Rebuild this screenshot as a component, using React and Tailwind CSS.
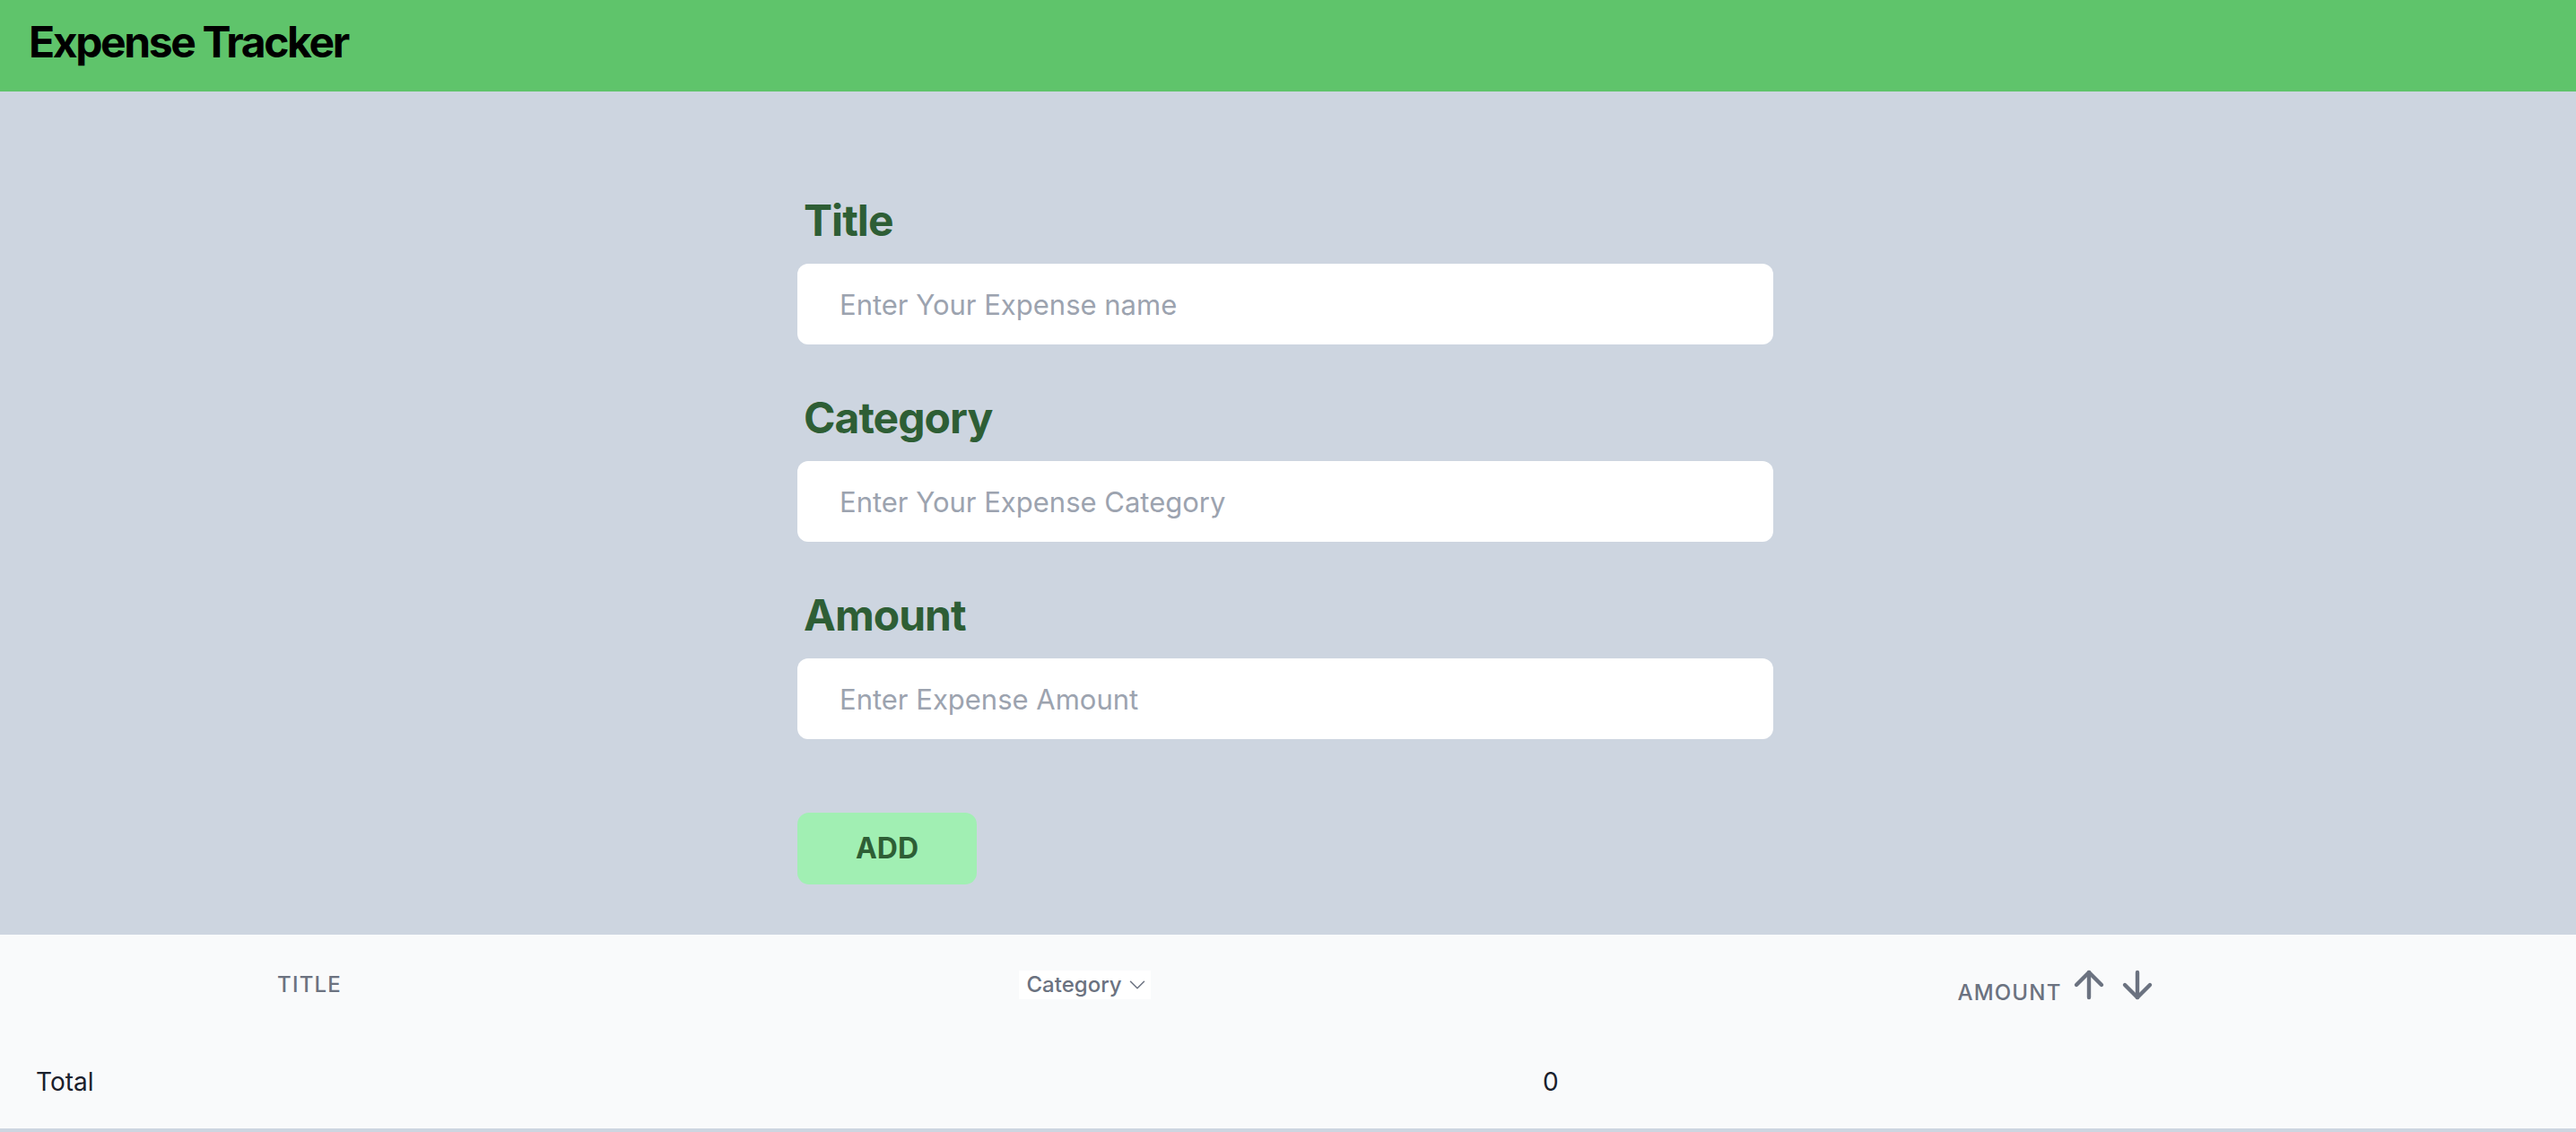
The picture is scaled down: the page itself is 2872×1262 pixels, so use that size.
import { ArrowUp, ArrowDown, ChevronDown } from 'lucide-react'

const FIELDS = [
  { label: 'Title', placeholder: 'Enter Your Expense name' },
  { label: 'Category', placeholder: 'Enter Your Expense Category' },
  { label: 'Amount', placeholder: 'Enter Expense Amount' },
]

function Field({ label, placeholder, last }) {
  return (
    <div className={last ? '' : 'mb-[58px]'}>
      <label className="block ml-[7px] mb-[24px] text-[48px] leading-[48px] font-bold tracking-[-0.02em] text-[#2e5e35]">
        {label}
      </label>
      <input
        type="text"
        placeholder={placeholder}
        className="w-full h-[90px] rounded-[12px] bg-white pl-[47px] pr-[32px] text-[31px] text-gray-800 placeholder:text-[#9ca3af] outline-none"
      />
    </div>
  )
}

export default function App() {
  return (
    <div className="min-h-screen bg-[#cdd5e0] font-['Inter',sans-serif]">
      {/* Header */}
      <header className="h-[102px] bg-[#5fc46b] px-[32px] pt-[23px]">
        <h1 className="text-[48px] leading-[48px] font-bold tracking-[-0.05em] text-black">Expense Tracker</h1>
      </header>

      {/* Form */}
      <main className="pt-[120px] pb-[56px]">
        <div className="w-[1088px] ml-[889px]">
          {FIELDS.map((f, i) => (
            <Field key={f.label} {...f} last={i === FIELDS.length - 1} />
          ))}
          <button className="mt-[82px] w-[200px] h-[80px] rounded-[13px] bg-[#a1efb3] text-[32px] leading-[32px] font-bold text-[#2e5e35]">
            ADD
          </button>
        </div>
      </main>

      {/* Table */}
      <section className="bg-[#f9fafb]">
        <div className="grid grid-cols-[690px_1038px_1fr] h-[112px] items-center">
          <div className="flex justify-center">
            <span className="text-[24px] leading-[24px] font-medium uppercase tracking-wider text-[#6b7280]">Title</span>
          </div>
          <div className="flex justify-center">
            <div className="flex items-center w-[147px] h-[32px] bg-white pl-[9px]">
              <span className="text-[24px] leading-[24px] font-medium text-[#6b7280]">Category</span>
              <ChevronDown size={30} strokeWidth={1.2} className="ml-auto text-[#6b7280]" />
            </div>
          </div>
          <div className="flex justify-center pr-[11px]">
            <div className="flex items-end gap-[6px]">
              <span className="text-[24px] leading-[24px] font-medium uppercase tracking-wider text-[#6b7280] mb-[3px]">Amount</span>
              <ArrowUp size={48} strokeWidth={2.2} className="text-[#6b7280]" />
              <ArrowDown size={48} strokeWidth={2.2} className="text-[#6b7280]" />
            </div>
          </div>
        </div>
        <div className="flex items-center h-[104px]">
          <div className="w-[1720px] pl-[40px] text-[28px] leading-[28px] text-[#1a202c]">Total</div>
          <div className="text-[28px] leading-[28px] text-[#1a202c]">0</div>
        </div>
      </section>
    </div>
  )
}
